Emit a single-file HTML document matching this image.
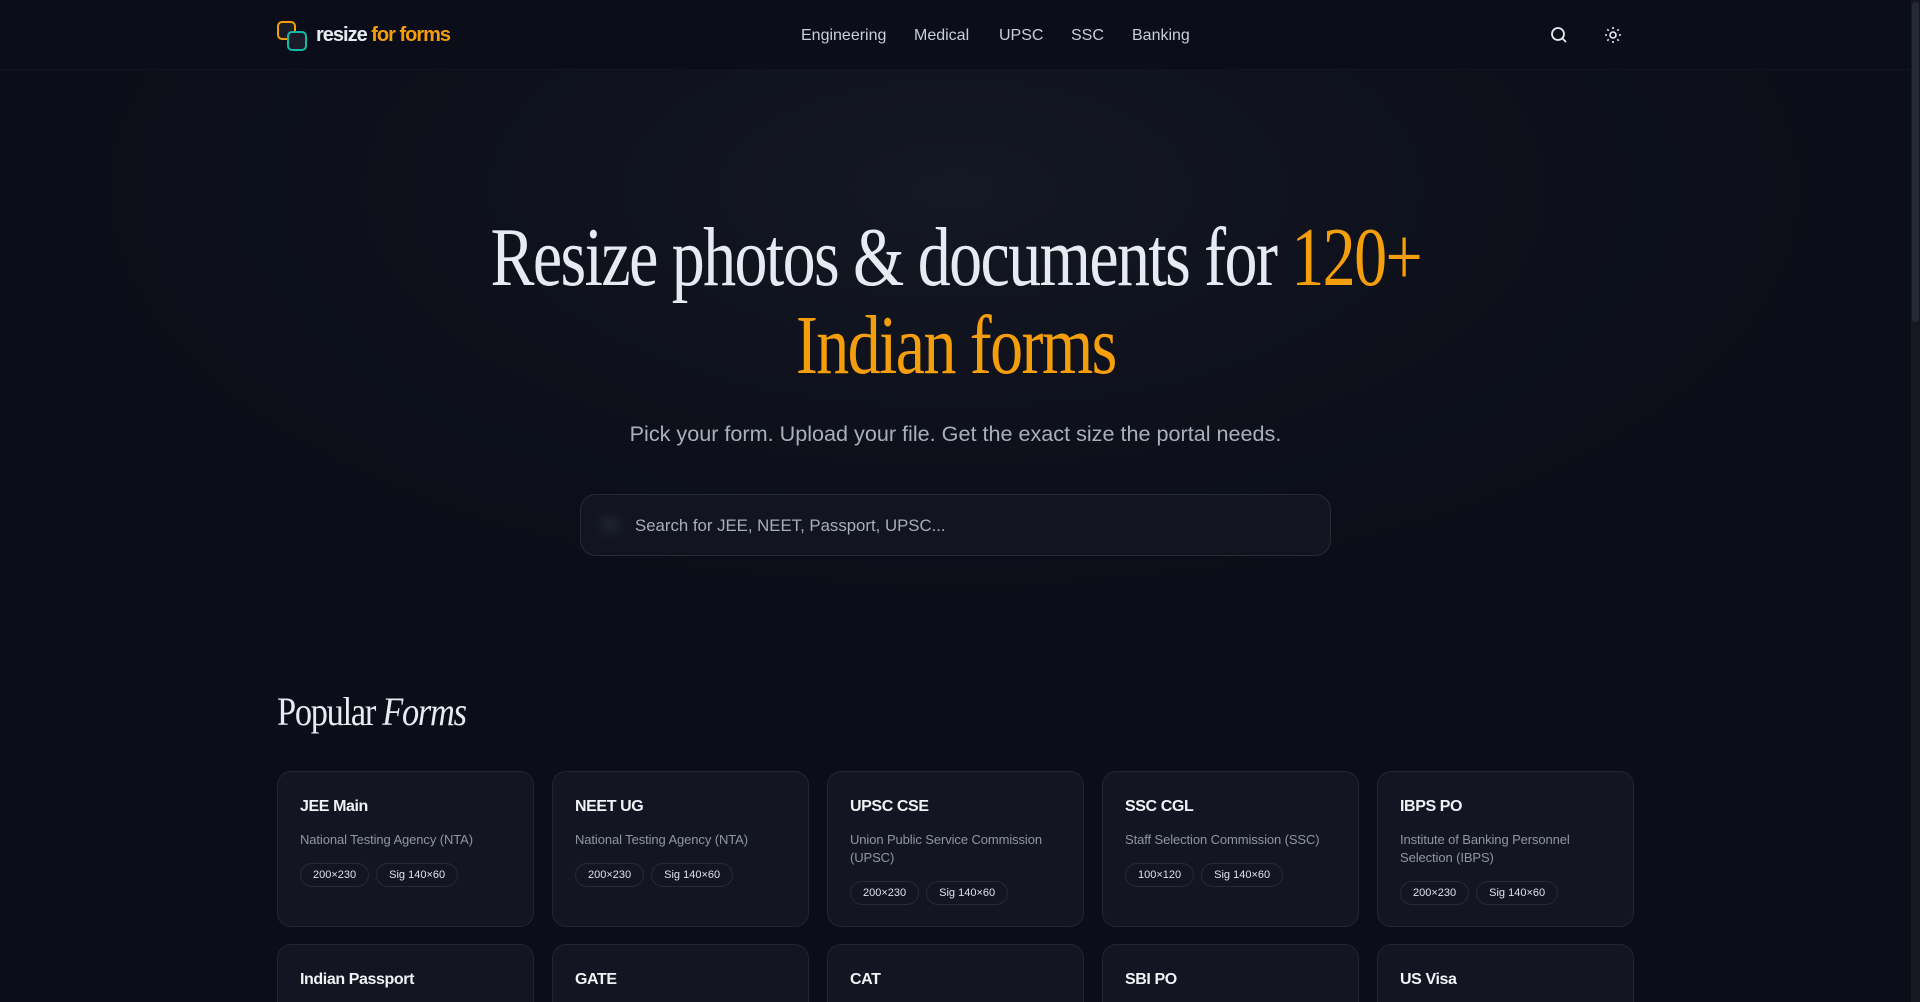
<!DOCTYPE html>
<html><head><meta charset="utf-8"><style>
*{box-sizing:border-box;margin:0;padding:0}
html,body{width:1920px;height:1002px;overflow:hidden;background:#0b0e18;font-family:"Liberation Sans",sans-serif;color:#e6eaf2;position:relative}
.hdr{position:absolute;left:0;top:0;width:1911px;height:70px;background:#0b0e18;border-bottom:1px solid #12151f}
.hero{position:absolute;left:0;top:70px;width:1911px;height:600px;background:radial-gradient(ellipse 900px 420px at 955px 120px,#141824 0%,#0e111b 55%,#0b0e18 100%)}
.sb{position:absolute;right:0;top:0;width:9px;height:1002px;background:#151821}
.sb i{position:absolute;left:1px;top:2px;width:7px;height:320px;background:#262a35;border-radius:4px}
.logo{position:absolute;left:277px;top:21px}
.lt{position:absolute;left:316px;top:24px;font-size:20px;font-weight:bold;letter-spacing:-1px}
.nav{position:absolute;top:27px;font-size:16px;color:#c9ceda}
.h1{position:absolute;left:0;width:1911px;text-align:center;font-family:"Liberation Serif",serif;font-size:84px;letter-spacing:-2px;white-space:nowrap}
.h1 span.w{display:inline-block;transform:scaleX(0.785);transform-origin:center}
.sub{position:absolute;top:421px;left:0;width:1911px;text-align:center;font-size:21.6px;color:#a9afbd}
.srch{position:absolute;left:580px;top:494px;width:751px;height:62px;border:1px solid #262a36;border-radius:16px;background:#121520}
.srch .d{position:absolute;left:13px;top:14px;width:32px;height:32px;border-radius:50%;background:radial-gradient(#1e2230,#121520 70%)}
.srch .t{position:absolute;left:54px;top:21px;font-size:16.8px;color:#a6adbb}
.pt{position:absolute;left:277px;top:688px;font-family:"Liberation Serif",serif;font-size:40px;letter-spacing:-1.5px;transform:scaleX(0.86);transform-origin:left}
.card{position:absolute;width:257px;height:156px;border:1px solid #22252f;border-radius:14px;background:#131622}
.card.s{height:80px;border-bottom-left-radius:0;border-bottom-right-radius:0;border-bottom:none}
.card b{position:absolute;left:22px;top:26px;font-size:16px;letter-spacing:-0.4px;color:#f0f2f6}
.card p{position:absolute;left:22px;top:59px;width:215px;font-size:13px;line-height:18px;color:#8f95a3;letter-spacing:-0.1px}
.pills{position:absolute;left:22px;display:flex;gap:7px}
.pills span{border:1px solid #272a35;border-radius:12px;height:24px;line-height:22px;padding:0 12px;font-size:11px;color:#dfe2ea}
</style></head><body>
<div class="hero"></div>
<div class="hdr"></div>
<svg class="logo" width="30" height="30" viewBox="0 0 30 30"><rect x="1" y="1" width="17" height="17" rx="4" fill="#1a1d28" stroke="#f59e0b" stroke-width="2"/><rect x="11" y="11" width="18" height="18" rx="4" fill="#1a1d28" stroke="#14b8a6" stroke-width="2"/></svg>
<div class="lt">resize <span style="color:#f59e0b">for forms</span></div>
<div class="nav" style="left:801px">Engineering</div>
<div class="nav" style="left:914px">Medical</div>
<div class="nav" style="left:999px">UPSC</div>
<div class="nav" style="left:1071px">SSC</div>
<div class="nav" style="left:1132px">Banking</div>
<svg style="position:absolute;left:1550px;top:26px" width="18" height="18" viewBox="0 0 18 18" fill="none" stroke="#e6eaf2" stroke-width="1.8"><circle cx="8" cy="8" r="6"/><path d="M12.5 12.5L16 16"/></svg>
<svg style="position:absolute;left:1604px;top:26px" width="18" height="18" viewBox="0 0 18 18" fill="none" stroke="#e6eaf2" stroke-width="1.6"><circle cx="9" cy="9" r="3"/><path d="M9 1v2M9 15v2M1 9h2M15 9h2M3.3 3.3l1.4 1.4M13.3 13.3l1.4 1.4M3.3 14.7l1.4-1.4M13.3 4.7l1.4-1.4"/></svg>
<div class="h1" style="top:209px"><span class="w">Resize photos &amp; documents for <span style="color:#f59e0b">120+</span></span></div>
<div class="h1" style="top:297px;color:#f59e0b"><span class="w">Indian forms</span></div>
<div class="sub">Pick your form. Upload your file. Get the exact size the portal needs.</div>
<div class="srch"><div class="d"></div><div class="t">Search for JEE, NEET, Passport, UPSC...</div></div>
<div class="pt">Popular <i>Forms</i></div>

<div class="card" style="left:277px;top:771px"><b>JEE Main</b><p>National Testing Agency (NTA)</p><div class="pills" style="top:91px"><span>200×230</span><span>Sig 140×60</span></div></div>
<div class="card" style="left:552px;top:771px"><b>NEET UG</b><p>National Testing Agency (NTA)</p><div class="pills" style="top:91px"><span>200×230</span><span>Sig 140×60</span></div></div>
<div class="card" style="left:827px;top:771px"><b>UPSC CSE</b><p>Union Public Service Commission (UPSC)</p><div class="pills" style="top:109px"><span>200×230</span><span>Sig 140×60</span></div></div>
<div class="card" style="left:1102px;top:771px"><b>SSC CGL</b><p>Staff Selection Commission (SSC)</p><div class="pills" style="top:91px"><span>100×120</span><span>Sig 140×60</span></div></div>
<div class="card" style="left:1377px;top:771px"><b>IBPS PO</b><p>Institute of Banking Personnel Selection (IBPS)</p><div class="pills" style="top:109px"><span>200×230</span><span>Sig 140×60</span></div></div>

<div class="card s" style="left:277px;top:944px;height:58px"><b>Indian Passport</b></div>
<div class="card s" style="left:552px;top:944px;height:58px"><b>GATE</b></div>
<div class="card s" style="left:827px;top:944px;height:58px"><b>CAT</b></div>
<div class="card s" style="left:1102px;top:944px;height:58px"><b>SBI PO</b></div>
<div class="card s" style="left:1377px;top:944px;height:58px"><b>US Visa</b></div>
<div class="sb"><i></i></div>
</body></html>
